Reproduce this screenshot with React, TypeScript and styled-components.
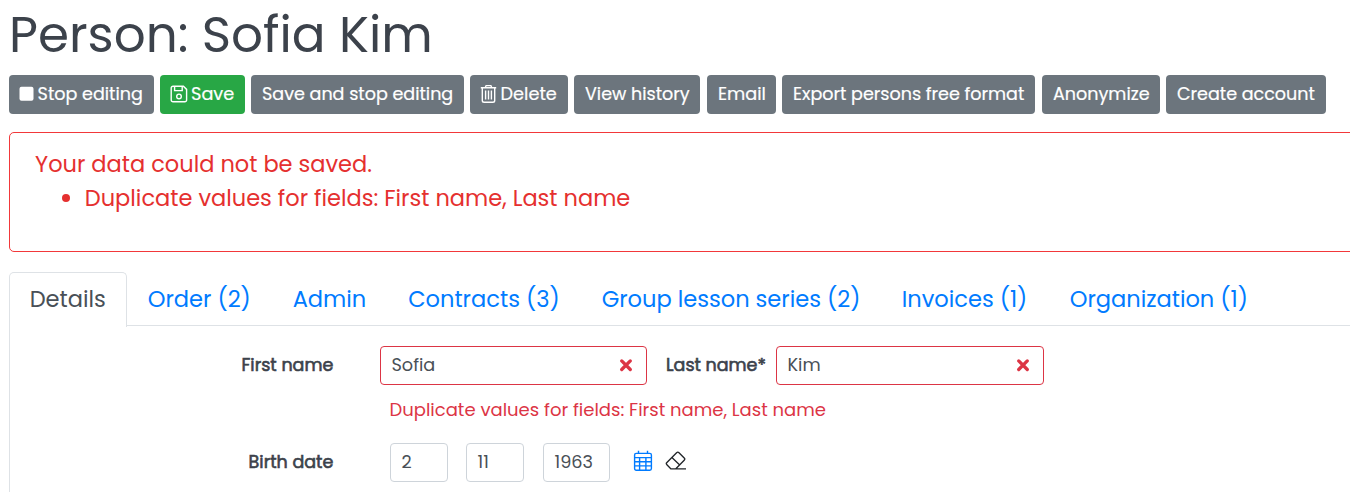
import React from "react";
import styled, { createGlobalStyle } from "styled-components";

const GlobalStyle = createGlobalStyle`
  *, *::before, *::after { box-sizing: border-box; }
  html, body { margin: 0; background: #fff; overflow: hidden; }
  body {
    font-family: Poppins, Inter, "Liberation Sans", sans-serif;
    font-size: 17.7px;
    color: #3c424b;
  }
`;

const Page = styled.main`
  width: 1368px;
  height: 492px;
  padding: 6px 9px 0;
  overflow: hidden;
`;

const Title = styled.h1`
  margin: 0 0 11px;
  font-size: 50px;
  line-height: 58px;
  font-weight: 400;
  white-space: nowrap;
`;

const Toolbar = styled.div`
  display: flex;
  height: 39px;
  margin-bottom: 18px;
`;

const Button = styled.button<{ $w: number; $size?: number; $gap?: number; $green?: boolean; $icon?: boolean }>`
  flex: none;
  display: flex;
  align-items: center;
  gap: ${(p) => (p.$green ? 3 : 3.6)}px;
  width: ${(p) => p.$w}px;
  margin-right: ${(p) => p.$gap ?? 6}px;
  padding: 0 0 2px ${(p) => (p.$icon ? 10 : 11)}px;
  border: 0;
  border-radius: 4px;
  background: ${(p) => (p.$green ? "#28a745" : "#6c757d")};
  color: #fff;
  font: inherit;
  font-size: ${(p) => p.$size ?? 17.55}px;
  -webkit-text-stroke: 0.2px currentColor;
  white-space: nowrap;

  svg { flex: none; }
`;

const Alert = styled.section`
  height: 120px;
  margin-bottom: 20px;
  padding: 14px 25px;
  border: 1px solid #f2383a;
  border-radius: 5px;
  color: #e5302f;
  font-size: 22.5px;
  line-height: 34px;
`;

const AlertText = styled.p`
  margin: 0;
`;

const AlertList = styled.ul`
  margin: 0;
  padding: 0 0 0 27px;
  list-style: none;
`;

const AlertItem = styled.li`
  display: flex;
  align-items: center;
  gap: 14.8px;

  &::before {
    content: "";
    width: 8px;
    height: 8px;
    border-radius: 50%;
    background: currentColor;
  }
`;

const Tabs = styled.nav`
  display: flex;
  height: 54px;
  border-bottom: 1px solid #dee2e6;
`;

const Tab = styled.a<{ $w: number; $active?: boolean }>`
  flex: none;
  width: ${(p) => p.$w}px;
  height: ${(p) => (p.$active ? 55 : 54)}px;
  padding-left: 19.7px;
  border: 1px solid ${(p) => (p.$active ? "#dee2e6" : "transparent")};
  border-bottom: 0;
  border-radius: 5px 5px 0 0;
  background: ${(p) => (p.$active ? "#fff" : "transparent")};
  color: ${(p) => (p.$active ? "#495057" : "#007bff")};
  font-size: 22.54px;
  line-height: 52px;
  white-space: nowrap;
`;

const Panel = styled.div`
  height: 180px;
  padding-top: 20px;
  border-left: 1px solid #dee2e6;
`;

const Row = styled.div`
  display: flex;
  height: 39px;
`;

const Label = styled.label<{ $w: number }>`
  flex: none;
  width: ${(p) => p.$w}px;
  text-align: right;
  font-size: 17.5px;
  -webkit-text-stroke: 0.6px currentColor;
  line-height: 38px;
  white-space: nowrap;
`;

const Field = styled.div<{ $w: number; $ml: number; $invalid?: boolean }>`
  flex: none;
  display: flex;
  align-items: center;
  justify-content: space-between;
  width: ${(p) => p.$w}px;
  height: 39px;
  margin-left: ${(p) => p.$ml}px;
  padding: 0 12.5px 2px 10.5px;
  border: 1px solid ${(p) => (p.$invalid ? "#dc3545" : "#ced4da")};
  border-radius: 4px;
  color: #495057;

  svg { margin-top: 1px; }
`;

const Help = styled.p`
  height: 58px;
  margin: 0;
  padding: 12px 0 0 379.5px;
  color: #dc3545;
  font-size: 18px;
  line-height: 26px;
`;

const Tools = styled.div`
  display: flex;
  gap: 12px;
  margin: 7px 0 0 23px;
`;

const StopIcon = () => (
  <svg width="15" height="16" viewBox="0 0 15 16">
    <rect x="0.5" y="0.8" width="14" height="14" rx="2" fill="#fff" />
  </svg>
);

const SaveIcon = () => (
  <svg width="18" height="18" viewBox="0 0 18 18" fill="none" stroke="#fff" strokeWidth="1.4">
    <path d="M3 1.2h10.4l3.2 3.2V15a1.8 1.8 0 0 1-1.8 1.8H3A1.8 1.8 0 0 1 1.2 15V3A1.8 1.8 0 0 1 3 1.2z" />
    <path d="M4.6 1.4v4.2h7.6V1.4" />
    <circle cx="9" cy="11.4" r="2.3" />
  </svg>
);

const TrashIcon = () => (
  <svg width="17" height="20" viewBox="0 0 17 20" fill="none" stroke="#fff" strokeWidth="1.4">
    <path d="M.8 3.7h15.4M5.3 3.5l.8-1.9h4.8l.8 1.9M2.3 3.9v12.6a1.8 1.8 0 0 0 1.8 1.8h8.8a1.8 1.8 0 0 0 1.8-1.8V3.9M5.6 6.5v9M8.5 6.5v9M11.4 6.5v9" />
  </svg>
);

const CrossIcon = () => (
  <svg width="14" height="14" viewBox="0 0 14 14" stroke="#dc3545" strokeWidth="3.3" strokeLinecap="round">
    <path d="M2.7 2.9l8.6 8.6M11.3 2.9l-8.6 8.6" />
  </svg>
);

const CalendarIcon = () => (
  <svg width="20" height="22" viewBox="0 0 20 22" fill="none" stroke="#007bff" strokeWidth="1.4">
    <rect x="1.6" y="3.4" width="16.8" height="16.8" rx="1.6" />
    <path d="M5.5 .8v2.6M14.5 .8v2.6M1.6 7.6h16.8M1.6 11.7h16.8M1.6 15.9h16.8M6.6 7.6v12.6M12.9 7.6v12.6" />
  </svg>
);

const EraserIcon = () => (
  <svg width="22" height="22" viewBox="0 0 22 22" fill="none" stroke="#212529" strokeWidth="1.35" strokeLinejoin="round">
    <path d="M6 18.9L1.9 14.8a1.7 1.7 0 0 1 0-2.4L11.6 2.7a1.7 1.7 0 0 1 2.4 0l5.2 5.2a1.7 1.7 0 0 1 0 2.4l-8.6 8.6M6.9 7.6l8.1 7.6M5.7 18.9H21" />
  </svg>
);

export default function App() {
  return (
    <>
      <GlobalStyle />
      <Page>
        <Title>Person: Sofia Kim</Title>
        <Toolbar>
          <Button $w={145} $icon><StopIcon />Stop editing</Button>
          <Button $w={85} $size={17.7} $icon $green><SaveIcon />Save</Button>
          <Button $w={213}>Save and stop editing</Button>
          <Button $w={98} $size={17.7} $icon><TrashIcon />Delete</Button>
          <Button $w={126} $size={17.5} $gap={7}>View history</Button>
          <Button $w={69} $size={17.7}>Email</Button>
          <Button $w={253} $gap={7}>Export persons free format</Button>
          <Button $w={118}>Anonymize</Button>
          <Button $w={160}>Create account</Button>
        </Toolbar>
        <Alert>
          <AlertText>Your data could not be saved.</AlertText>
          <AlertList>
            <AlertItem>Duplicate values for fields: First name, Last name</AlertItem>
          </AlertList>
        </Alert>
        <Tabs>
          <Tab $w={118} $active>Details</Tab>
          <Tab $w={145}>Order (2)</Tab>
          <Tab $w={115.5}>Admin</Tab>
          <Tab $w={193.5}>Contracts (3)</Tab>
          <Tab $w={300}>Group lesson series (2)</Tab>
          <Tab $w={168}>Invoices (1)</Tab>
          <Tab $w={219}>Organization (1)</Tab>
        </Tabs>
        <Panel>
          <Row>
            <Label $w={323.3}>First name</Label>
            <Field $w={267} $ml={46.7} $invalid><span>Sofia</span><CrossIcon /></Field>
            <Label $w={119}>Last name*</Label>
            <Field $w={268} $ml={10} $invalid><span>Kim</span><CrossIcon /></Field>
          </Row>
          <Help>Duplicate values for fields: First name, Last name</Help>
          <Row>
            <Label $w={323.3}>Birth date</Label>
            <Field $w={58} $ml={56.7}>2</Field>
            <Field $w={58} $ml={18}>11</Field>
            <Field $w={67} $ml={19}>1963</Field>
            <Tools><CalendarIcon /><EraserIcon /></Tools>
          </Row>
        </Panel>
      </Page>
    </>
  );
}
